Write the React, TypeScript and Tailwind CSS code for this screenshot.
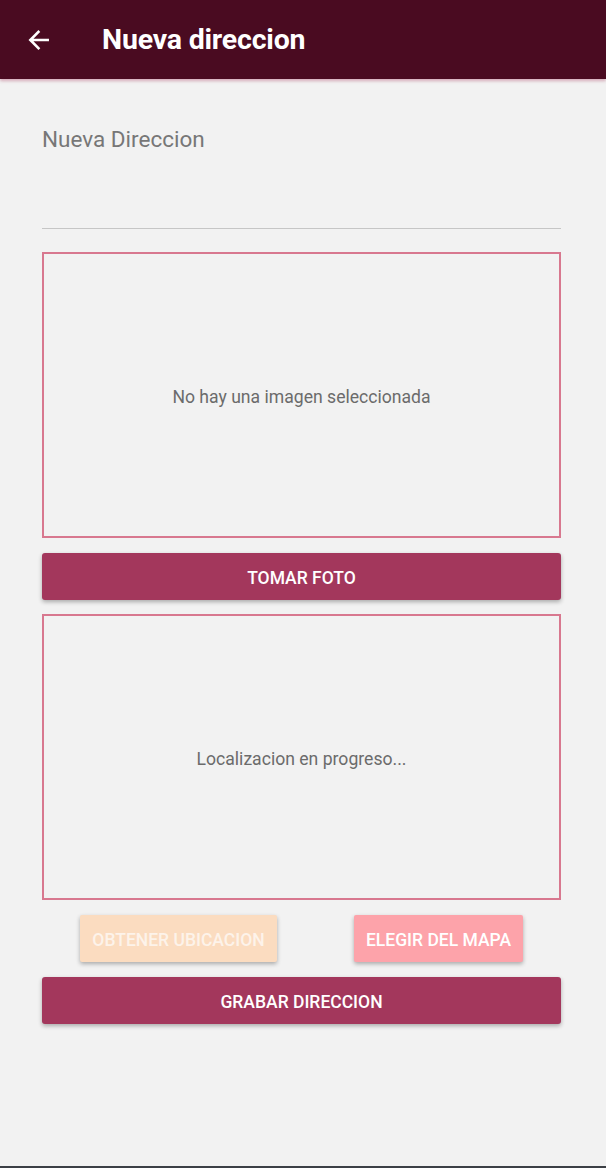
import React from 'react'

const font = { fontFamily: 'Roboto, "Noto Sans", sans-serif' }

function PreviewBox({ text }: { text: string }) {
  return (
    <div className="h-[286px] border-2 border-[#d8788f] flex items-center justify-center pt-[5px]">
      <span className="text-[17.6px] text-[#6b6b6b]">{text}</span>
    </div>
  )
}

function MainButton({ label }: { label: string }) {
  return (
    <button className="h-[47px] w-full pt-[3px] rounded-[3px] bg-[#a3375c] text-white text-[17.5px] font-medium shadow-[0_2px_4px_rgba(0,0,0,0.3)]">
      {label}
    </button>
  )
}

export default function App() {
  return (
    <div className="w-[606px] h-[1168px] bg-[#f2f2f2] flex flex-col" style={font}>
      {/* Header */}
      <div className="h-[79px] bg-[#4a0b21] flex items-center shadow-[0_2px_3px_rgba(160,40,80,0.35)]">
        <svg className="ml-[26px] w-[26px] h-[26px]" viewBox="0 0 24 24" fill="none" stroke="white" strokeWidth={2.4} strokeLinecap="square">
          <path d="M20 12H4.5M11.5 4.5L4 12l7.5 7.5" />
        </svg>
        <h1 className="ml-[50px] pt-[2px] text-white text-[28.5px] font-bold tracking-[-0.2px]">Nueva direccion</h1>
      </div>

      <div className="flex-1 pl-[42px] pr-[45px] pt-[44px]">
        {/* Input */}
        <div className="h-[106px] border-b border-[#c6c6c6] mb-[23px]">
          <span className="text-[22.5px] text-[#777777]">Nueva Direccion</span>
        </div>

        <PreviewBox text="No hay una imagen seleccionada" />
        <div className="mt-[15px] mb-[14px]">
          <MainButton label="TOMAR FOTO" />
        </div>
        <PreviewBox text="Localizacion en progreso..." />

        {/* Location buttons */}
        <div className="flex justify-between pl-[38px] pr-[38px] mt-[15px]">
          <button className="h-[47px] w-[197px] pt-[3px] rounded-[2px] bg-[#fbdcc0] text-[#fdf3ea] text-[17.5px] font-medium shadow-[0_2px_4px_rgba(0,0,0,0.3)]">
            OBTENER UBICACION
          </button>
          <button className="h-[47px] w-[169px] pt-[3px] rounded-[2px] bg-[#fda3aa] text-white text-[17.5px] font-medium shadow-[0_2px_4px_rgba(0,0,0,0.3)]">
            ELEGIR DEL MAPA
          </button>
        </div>

        <div className="mt-[15px]">
          <MainButton label="GRABAR DIRECCION" />
        </div>
      </div>

      <div className="h-[2px] bg-[#3c4046]" />
    </div>
  )
}
